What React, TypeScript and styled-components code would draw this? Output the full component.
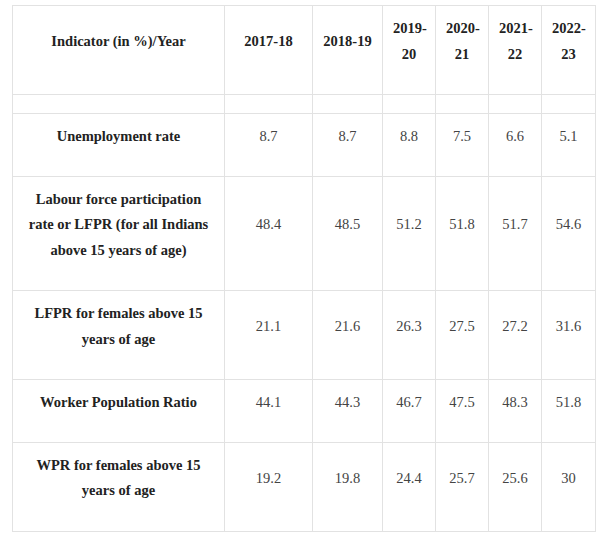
import React from "react";
import styled, { createGlobalStyle } from "styled-components";

const Global = createGlobalStyle`
  html, body { margin: 0; padding: 0; background: #fff; }
  body { font-family: "Liberation Serif", "Times New Roman", Tinos, "DejaVu Serif", serif; }
`;

const Wrap = styled.div`
  padding: 5px 5px 0 12px;
`;

const Table = styled.table`
  border-collapse: collapse;
  table-layout: fixed;
  width: 584px;
`;

const Cell = styled.td<{ $head?: boolean; $spacer?: boolean }>`
  font-family: "Liberation Serif", "Times New Roman", Tinos, "DejaVu Serif", serif;
  font-size: 14.5px;
  line-height: 25.6px;
  border: 1px solid #e2e2e2;
  text-align: center;
  vertical-align: middle;
  padding: ${(p) => (p.$spacer ? "0" : "10px 10px 26.5px")};
  height: ${(p) => (p.$spacer ? "18px" : "auto")};
  font-weight: ${(p) => (p.$head ? 700 : 400)};
  color: ${(p) => (p.$head ? "#222" : "#444")};
`;

const widths = [212, 88, 70, 53, 53, 53, 54];

const header = ["Indicator (in %)/Year", "2017-18", "2018-19", "2019-20", "2020-21", "2021-22", "2022-23"];

const rows: [string, string[]][] = [
  ["Unemployment rate", ["8.7", "8.7", "8.8", "7.5", "6.6", "5.1"]],
  ["Labour force participation rate or LFPR (for all Indians above 15 years of age)", ["48.4", "48.5", "51.2", "51.8", "51.7", "54.6"]],
  ["LFPR for females above 15 years of age", ["21.1", "21.6", "26.3", "27.5", "27.2", "31.6"]],
  ["Worker Population Ratio", ["44.1", "44.3", "46.7", "47.5", "48.3", "51.8"]],
  ["WPR for females above 15 years of age", ["19.2", "19.8", "24.4", "25.7", "25.6", "30"]],
];

export default function App() {
  return (
    <>
      <Global />
      <Wrap>
        <Table>
          <colgroup>
            {widths.map((w, i) => (
              <col key={i} style={{ width: w }} />
            ))}
          </colgroup>
          <tbody>
            <tr>
              {header.map((h, i) => (
                <Cell key={i} $head>
                  {h}
                </Cell>
              ))}
            </tr>
            <tr>
              {widths.map((_, i) => (
                <Cell key={i} $spacer />
              ))}
            </tr>
            {rows.map(([label, vals]) => (
              <tr key={label}>
                <Cell $head>{label}</Cell>
                {vals.map((v, i) => (
                  <Cell key={i}>{v}</Cell>
                ))}
              </tr>
            ))}
          </tbody>
        </Table>
      </Wrap>
    </>
  );
}
